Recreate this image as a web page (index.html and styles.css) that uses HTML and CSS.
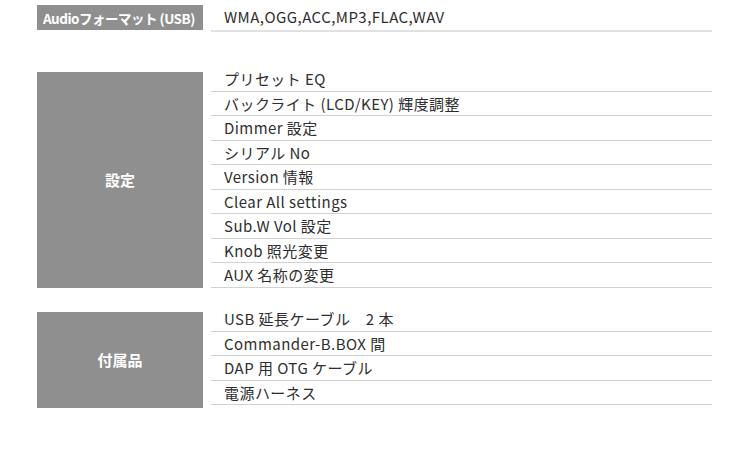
FILE: index.html
```html
<!DOCTYPE html>
<html lang="ja">
<head>
<meta charset="utf-8">
<link rel="stylesheet" href="styles.css">
</head>
<body>
<div class="spec">
  <section class="sec sec--top">
    <div class="label label--left">Audioフォーマット (USB)</div>
    <ul class="list">
      <li class="row row--top">WMA,OGG,ACC,MP3,FLAC,WAV</li>
    </ul>
  </section>
  <section class="sec sec--settings">
    <div class="label">設定</div>
    <ul class="list">
      <li class="row">プリセット EQ</li>
      <li class="row">バックライト (LCD/KEY) 輝度調整</li>
      <li class="row">Dimmer 設定</li>
      <li class="row">シリアル No</li>
      <li class="row">Version 情報</li>
      <li class="row">Clear All settings</li>
      <li class="row">Sub.W Vol 設定</li>
      <li class="row">Knob 照光変更</li>
      <li class="row">AUX 名称の変更</li>
    </ul>
  </section>
  <section class="sec sec--acc">
    <div class="label">付属品</div>
    <ul class="list list--pad">
      <li class="row">USB 延長ケーブル　2 本</li>
      <li class="row">Commander-B.BOX 間</li>
      <li class="row">DAP 用 OTG ケーブル</li>
      <li class="row">電源ハーネス</li>
    </ul>
  </section>
</div>
</body>
</html>
```
FILE: styles.css
```css
html, body {
  margin: 0;
  padding: 0;
  background: #fff;
}
body {
  font-family: "Noto Sans CJK JP", "Noto Sans", sans-serif;
  font-size: 14px;
  color: #333;
}
.spec {
  padding: 5px 0 0 37px;
  width: 675px;
}
.sec {
  display: flex;
  align-items: stretch;
}
.sec--settings {
  margin-top: 40px;
}
.sec--acc {
  margin-top: 24px;
}
.label {
  width: 166px;
  flex: none;
  background: #8f8f8f;
  color: #fff;
  display: flex;
  align-items: center;
  justify-content: center;
  font-size: 15px;
  font-weight: 700;
}
.label--left {
  justify-content: flex-start;
  padding-left: 6px;
  box-sizing: border-box;
  height: 25px;
  font-size: 13.5px;
  letter-spacing: -0.5px;
}
.list {
  list-style: none;
  margin: -4.5px 0 0 8px;
  padding: 0;
  width: 501px;
}
.list--pad {
  padding-bottom: 3px;
}
.sec--top .list {
  margin-top: 0;
}
.row {
  box-sizing: border-box;
  height: 24.5px;
  border-bottom: 1px solid #d2d2d2;
  padding-left: 13px;
  line-height: 24px;
  font-size: 15px;
  letter-spacing: 0.45px;
  color: #2e2e2e;
  white-space: nowrap;
}
.row--top {
  height: 26.5px;
  line-height: 24px;
  border-bottom: 2px solid #e2e2e2;
}
```
